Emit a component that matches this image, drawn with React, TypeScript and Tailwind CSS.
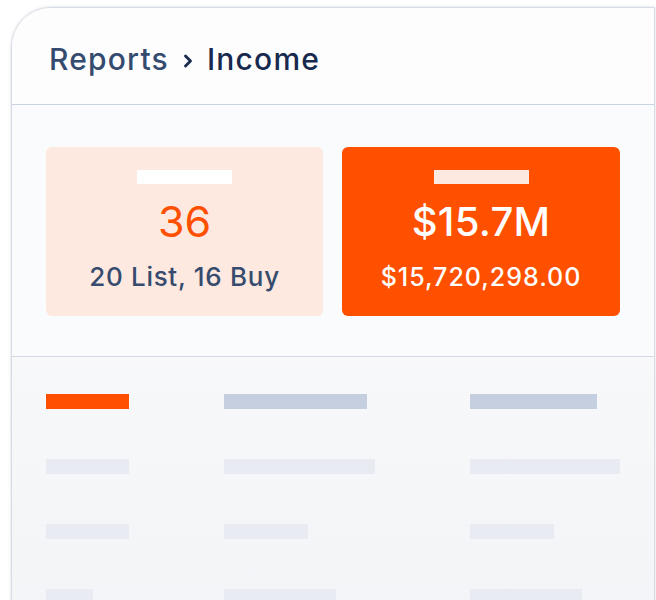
import { ChevronRight } from 'lucide-react';

const rows = [
  { bars: ['w-[83px]', 'w-[143px]', 'w-[127px]'], head: true },
  { bars: ['w-[83px]', 'w-[151px]', 'w-[150px]'], head: false },
  { bars: ['w-[83px]', 'w-[84px]', 'w-[84px]'], head: false },
  { bars: ['w-[47px]', 'w-[112px]', 'w-[112px]'], head: false },
];

const App = () => {
  return (
    <div className="h-[600px] w-[656px] overflow-hidden bg-white pl-[11px] pt-[7px] font-['Inter',sans-serif]">
      <div className="h-[640px] w-[644px] overflow-hidden rounded-tl-[40px] border border-[#d6dbe4] bg-gradient-to-b from-[#fdfdfe] to-[#f3f4f7] shadow-[0_0_3px_rgba(100,110,130,0.25)]">
        {/* Header */}
        <div className="flex h-[97px] items-center border-b border-[#cad3e2] bg-[#fdfdfe] pl-[37px] pt-[6px]">
          <span className="text-[30px] font-medium tracking-[1.2px] text-[#354b6e]">Reports</span>
          <ChevronRight className="mx-[9px] mt-[3px] h-[20px] w-[20px] text-[#1b2c4f]" strokeWidth={3.5} />
          <span className="text-[30px] font-medium tracking-[1.2px] text-[#172a4e]">Income</span>
        </div>

        {/* Stats */}
        <div className="flex gap-[19px] border-b border-[#d3d9e4] bg-[#fafbfc] px-[34px] pt-[42px] pb-[40px]">
          <div className="flex h-[169px] w-[277px] flex-col items-center rounded-[6px] bg-[#fee9e1] pt-[23px]">
            <div className="h-[14px] w-[95px] bg-white" />
            <div className="mt-[11px] text-[43px] leading-[52px] font-normal text-[#ff5000]">36</div>
            <div className="mt-[14px] text-[26px] leading-[32px] font-medium tracking-[0.7px] text-[#364b6d]">20 List, 16 Buy</div>
          </div>
          <div className="flex h-[169px] w-[278px] flex-col items-center rounded-[6px] bg-[#ff5000] pt-[23px]">
            <div className="h-[14px] w-[95px] bg-[#fee9e1]" />
            <div className="mt-[12px] text-[40px] leading-[52px] font-medium tracking-[0.3px] text-white">$15.7M</div>
            <div className="mt-[13px] text-[25px] leading-[32px] font-medium tracking-[1px] text-white">$15,720,298.00</div>
          </div>
        </div>

        {/* Table placeholder */}
        <div className="flex flex-col gap-[50px] px-[34px] pt-[37px]">
          {rows.map((row, i) => (
            <div key={i} className="grid h-[15px] grid-cols-[178px_246px_1fr]">
              {row.bars.map((w, j) => (
                <div
                  key={j}
                  className={`h-[15px] ${w} ${
                    row.head ? (j === 0 ? 'bg-[#ff5000]' : 'bg-[#c6cfdf]') : 'bg-[#e8ebf2]'
                  }`}
                />
              ))}
            </div>
          ))}
        </div>
      </div>
    </div>
  );
};

export default App;
